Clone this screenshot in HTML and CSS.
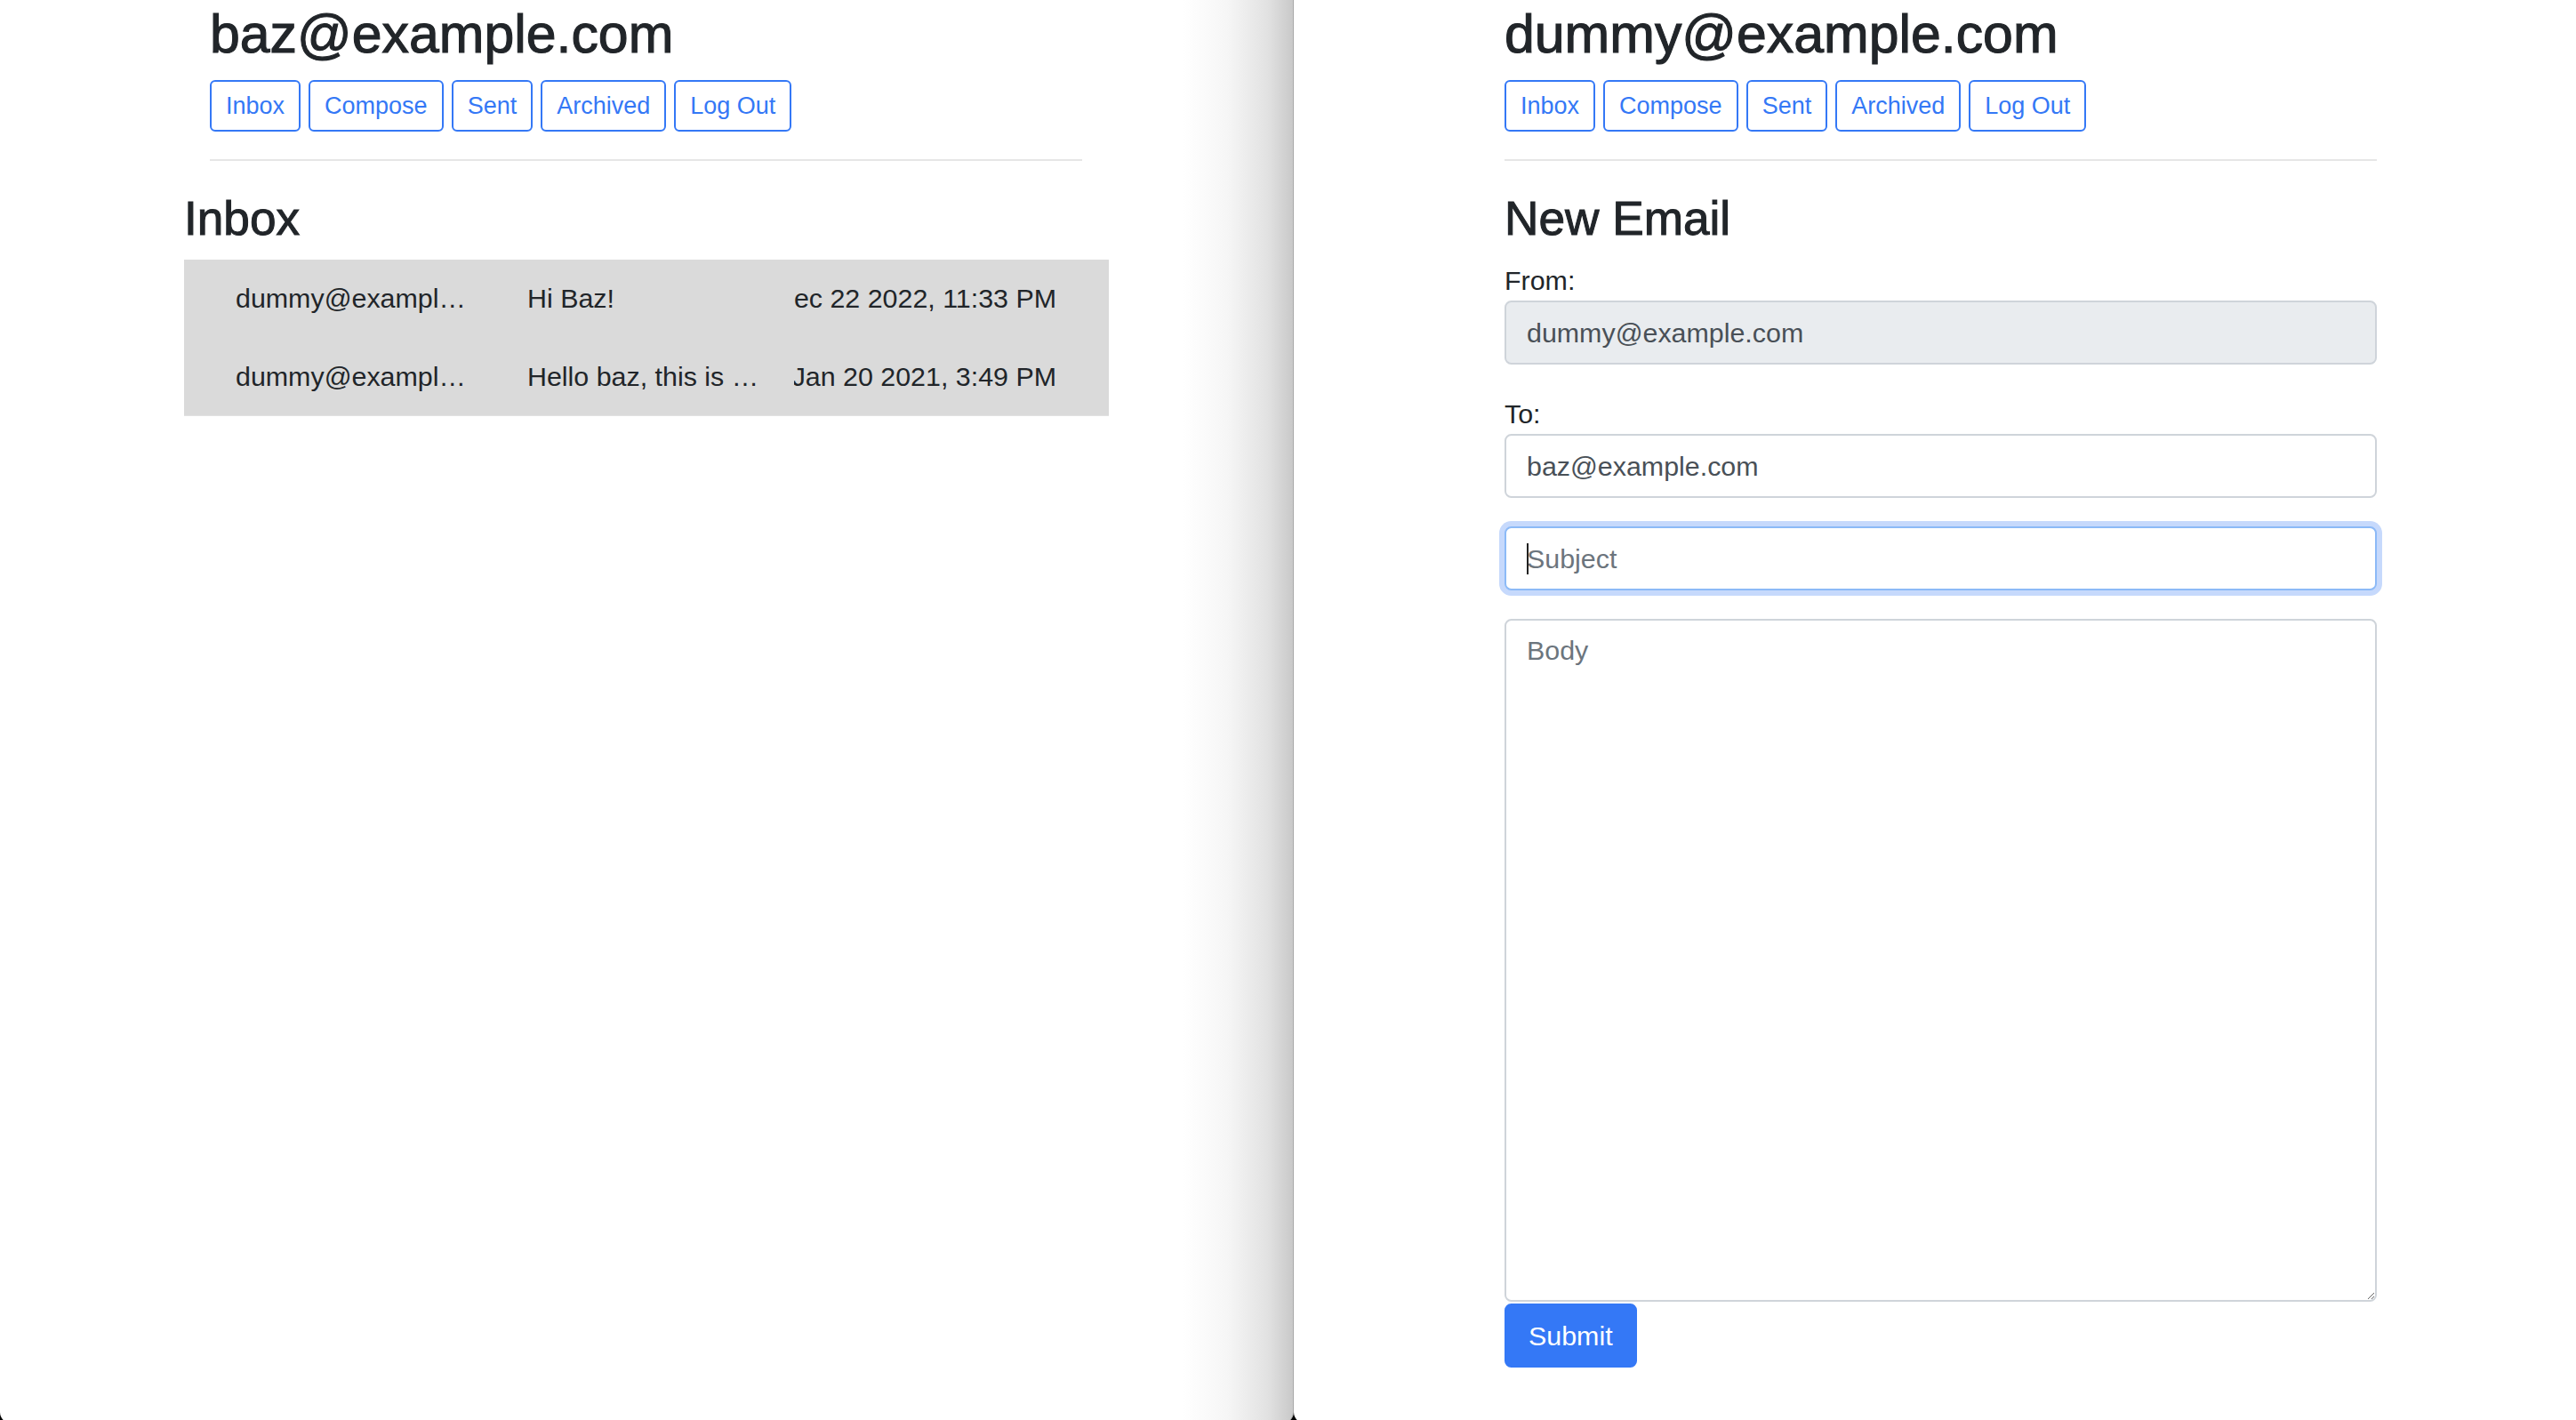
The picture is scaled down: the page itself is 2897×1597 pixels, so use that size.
FILE: index.html
```html
<!DOCTYPE html>
<html lang="en">
<head>
<meta charset="utf-8">
<title>Mail</title>
<link rel="stylesheet" href="styles.css">
</head>
<body>
  <div class="window window-left">
    <div class="container">
      <h2 class="user">baz@example.com</h2>
      <nav class="nav">
        <button class="btn-outline">Inbox</button>
        <button class="btn-outline">Compose</button>
        <button class="btn-outline">Sent</button>
        <button class="btn-outline">Archived</button>
        <button class="btn-outline">Log Out</button>
      </nav>
      <div class="rule"></div>
    </div>
    <section class="inbox">
      <h3 class="section-title">Inbox</h3>
      <div class="mail-list">
        <div class="mail-row">
          <span class="cell from">dummy@example.com</span>
          <span class="cell subject">Hi Baz!</span>
          <span class="cell date"><span>Dec 22 2022, 11:33 PM</span></span>
        </div>
        <div class="mail-row">
          <span class="cell from">dummy@example.com</span>
          <span class="cell subject">Hello baz, this is a test email</span>
          <span class="cell date"><span>Jan 20 2021, 3:49 PM</span></span>
        </div>
      </div>
    </section>
  </div>

  <div class="window window-right">
    <div class="container">
      <h2 class="user">dummy@example.com</h2>
      <nav class="nav">
        <button class="btn-outline">Inbox</button>
        <button class="btn-outline">Compose</button>
        <button class="btn-outline">Sent</button>
        <button class="btn-outline">Archived</button>
        <button class="btn-outline">Log Out</button>
      </nav>
      <div class="rule"></div>
      <h3 class="section-title">New Email</h3>
      <form class="compose">
        <div class="field">
          <label class="label">From:</label>
          <input class="control control-readonly" type="text" value="dummy@example.com" readonly>
        </div>
        <div class="field">
          <label class="label">To:</label>
          <input class="control" type="text" value="baz@example.com">
        </div>
        <div class="field subject-wrap">
          <input class="control control-focus" type="text" placeholder="Subject">
          <span class="caret"></span>
        </div>
        <textarea class="control body-area" placeholder="Body"></textarea>
        <button class="btn-primary" type="button">Submit</button>
      </form>
    </div>
  </div>
</body>
</html>
```
FILE: styles.css
```css
* {
  box-sizing: border-box;
}

html,
body {
  margin: 0;
  height: 1597px;
  overflow: hidden;
  background: #000;
}

body {
  display: flex;
  align-items: flex-start;
  font-family: "Liberation Sans", Arial, sans-serif;
  color: #212529;
}

.window {
  height: 1601px;
  padding-top: 2px;
}

.window-left {
  flex: none;
  width: 1455px;
  padding-left: 207px;
  border-right: 1px solid #a9a9a9;
  border-radius: 0 0 13px 13px;
  background: linear-gradient(to right, #fff 0, #fff 1330px, #f6f6f6 1380px, #e2e2e2 1425px, #c9c9c9 1454px);
}

.window-right {
  flex: 1;
  padding-left: 237px;
  background: #fff;
  border-bottom-left-radius: 13px;
}

.container {
  width: 981px;
}

.window-left .container {
  margin-left: 29px;
}

.user {
  margin: 0 0 15px;
  font-size: 60.8px;
  line-height: 73px;
  font-weight: 500;
  color: #212529;
  -webkit-text-stroke: 1.1px #212529;
}

.nav {
  display: flex;
  gap: 9px;
}

.btn-outline {
  display: flex;
  align-items: center;
  height: 58px;
  padding: 0 16px;
  font-family: "Liberation Sans", Arial, sans-serif;
  font-size: 27px;
  line-height: 1;
  color: #3478f6;
  background: #fff;
  border: 2px solid #3478f6;
  border-radius: 6px;
}

.rule {
  height: 2px;
  margin-top: 31px;
  background: #e6e6e6;
}

.section-title {
  margin: 33px 0 14px;
  font-size: 53.2px;
  line-height: 64px;
  font-weight: 500;
  color: #212529;
  -webkit-text-stroke: 1px #212529;
}

.inbox {
  width: 1040px;
}

.mail-list {
  background: #dadada;
  border-bottom: 1px solid #e2e2e2;
}

.mail-row {
  display: grid;
  grid-template-columns: 328px 296px 299px;
  padding: 21px 59px 21px 58px;
  font-size: 30.4px;
  line-height: 45.6px;
  color: #212529;
}

.cell {
  display: block;
  white-space: nowrap;
  overflow: hidden;
  text-overflow: ellipsis;
}

.from,
.subject {
  width: 268px;
}

.date {
  display: flex;
  justify-content: flex-end;
  justify-self: end;
  width: 295px;
}

.date span {
  flex: none;
}

.compose {
  display: flex;
  flex-direction: column;
}

.field {
  margin-bottom: 32px;
}

.label {
  display: block;
  font-size: 30.4px;
  line-height: 46px;
  color: #212529;
}

.control {
  display: block;
  width: 100%;
  height: 72px;
  padding: 0 23px;
  font-family: "Liberation Sans", Arial, sans-serif;
  font-size: 30.4px;
  color: #495057;
  background: #fff;
  border: 2px solid #cfd4da;
  border-radius: 7.6px;
  outline: none;
}

.control::placeholder {
  color: #6c757d;
  opacity: 1;
}

.control-readonly {
  background: #e9ecef;
}

.control-focus {
  border-color: #8cbaf7;
  box-shadow: 0 0 0 6px #c6d9fc;
}

.subject-wrap {
  position: relative;
}

.caret {
  position: absolute;
  left: 25px;
  top: 19px;
  width: 2px;
  height: 35px;
  background: #222;
}

.body-area {
  height: 768px;
  padding: 11.4px 23px;
  line-height: 1.5;
  resize: vertical;
}

.btn-primary {
  align-self: flex-start;
  margin-top: 2px;
  height: 72px;
  padding: 0 25px;
  font-family: "Liberation Sans", Arial, sans-serif;
  font-size: 30.4px;
  color: #fff;
  background: #3478f6;
  border: 2px solid #3478f6;
  border-radius: 7.6px;
}
```
